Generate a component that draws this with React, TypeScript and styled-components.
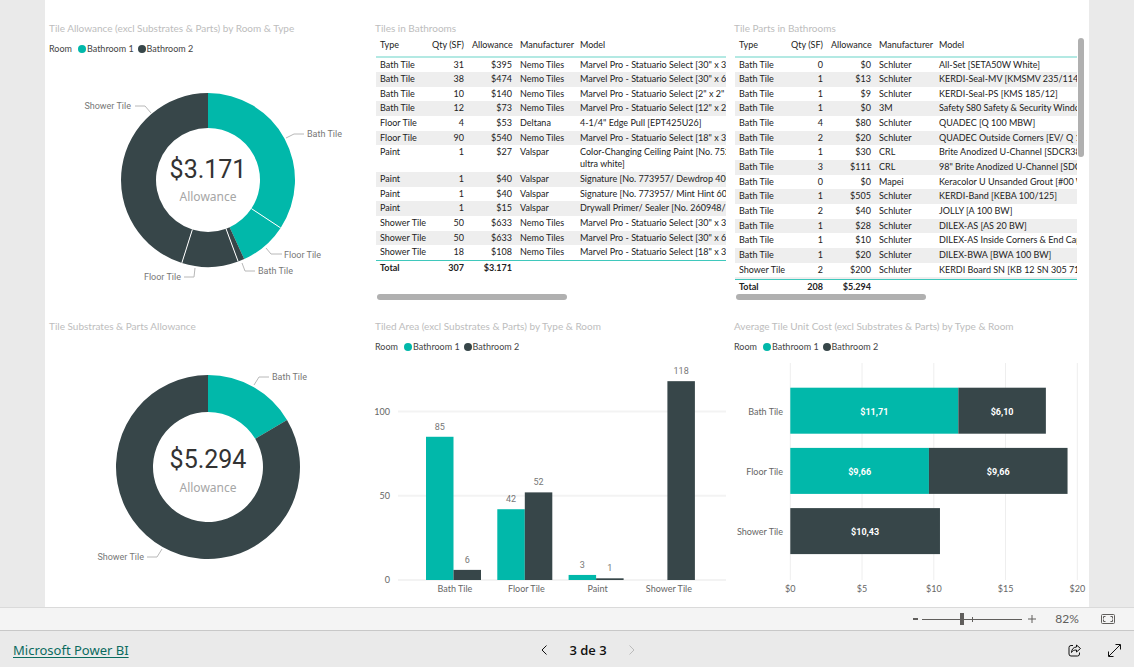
import React from "react";
import styled, { createGlobalStyle } from "styled-components";

const TEAL = "#01b8aa";
const SLATE = "#374649";
const UI = '"Noto Sans", "Open Sans", sans-serif';
const COMPACT = 'Lato, "Open Sans", sans-serif';
const DIN = 'Roboto, "Liberation Sans", sans-serif';

const GlobalStyle = createGlobalStyle`
  *, *::before, *::after { box-sizing: border-box; }
  body { margin: 0; background: #eaeaea; font-family: ${UI}; font-size: 9px; color: #333; }
`;

const Shell = styled.div`
  min-height: 100vh;
  display: flex;
  flex-direction: column;
`;

const Report = styled.main`
  flex: 1;
  margin: 0 45px;
  padding: 20px 4px 0;
  background: #fff;
  display: grid;
  grid-template-columns: 318fr 351fr 351fr;
  grid-template-rows: auto 1fr;
  column-gap: 8px;
  row-gap: 18px;
`;

const Panel = styled.section`
  min-width: 0;
  display: flex;
  flex-direction: column;
`;

const PanelTitle = styled.h2`
  margin: 0;
  font-family: ${COMPACT};
  font-size: 10px;
  font-weight: 400;
  line-height: 16px;
  color: #bdbdbd;
  white-space: nowrap;
`;

const LegendRow = styled.div`
  display: flex;
  align-items: center;
  margin-top: 5px;
  font-family: ${COMPACT};
  line-height: 16px;
  color: #444;
  white-space: nowrap;
`;

const LegendName = styled.span`
  margin-right: 6px;
`;

const LegendItem = styled.span`
  display: flex;
  align-items: center;
  gap: 1px;
  margin-right: 4px;
`;

const Dot = styled.i<{ $color: string }>`
  width: 8px;
  height: 8px;
  border-radius: 50%;
  background: ${(p) => p.$color};
`;

const Chart = styled.svg`
  display: block;
  width: 100%;
  height: auto;
  overflow: visible;
`;

const UiText = styled.text`
  font-family: ${COMPACT};
  font-size: 9px;
  fill: #666;
`;

const DataText = styled.text`
  font-family: ${DIN};
  font-size: 9px;
  fill: #777;
`;

const BarValue = styled(DataText)`
  font-weight: 700;
  fill: #fff;
`;

const BigNumber = styled.text`
  font-family: ${DIN};
  font-size: 25px;
  fill: #333;
`;

const Caption = styled.text`
  font-family: ${UI};
  font-size: 12px;
  fill: #a6a6a6;
`;

const TableArea = styled.div`
  display: flex;
  flex: 1;
`;

const TableClip = styled.div`
  flex: 1;
  min-width: 0;
  height: 258px;
  margin-left: 1px;
  overflow: hidden;
`;

const DataTable = styled.table`
  table-layout: fixed;
  width: 100%;
  border-spacing: 0;
  font-family: ${COMPACT};
  line-height: 12px;
  color: #222;
  white-space: pre;

  th, td {
    padding: 1px 4px 0;
    text-align: left;
    vertical-align: top;
    font-weight: 400;
  }
  th {
    padding: 0 4px 2px;
    line-height: 18px;
    border-bottom: 2px solid #b3e9e3;
  }
  tbody td { height: 15px; }
  tbody tr:first-child td, tbody tr:nth-child(3n) td { height: 14px; }
  tbody tr:nth-child(even) td { background: #eee; }
  tfoot td {
    height: 16px;
    border-top: 1px solid #3fc8bc;
    font-weight: 700;
  }
`;

const PeekRow = styled.tr`
  && td { height: 2px; padding: 0; line-height: 0; }
`;

const Col = styled.col<{ $w?: number }>`
  ${(p) => (p.$w ? `width: ${p.$w}px;` : "")}
`;

const NumHead = styled.th`
  && { text-align: right; }
`;

const NumCell = styled.td`
  && { text-align: right; }
`;

const TallCell = styled.td`
  && { padding-bottom: 2px; }
`;

const VerticalThumb = styled.div`
  width: 6px;
  height: 119px;
  margin: 2px 1px 0;
  border-radius: 3px;
  background: #b0b0b0;
`;

const HorizontalThumb = styled.div`
  width: 190px;
  height: 6px;
  margin: 0 0 0 2px;
  border-radius: 3px;
  background: #b0b0b0;
`;

const ZoomBar = styled.div`
  display: flex;
  align-items: center;
  justify-content: flex-end;
  height: 24px;
  padding-right: 18px;
  background: #f4f4f4;
  border-top: 1px solid #dadada;
  border-bottom: 1px solid #c8c8c8;
  color: #605e5c;
`;

const PlainButton = styled.button`
  display: flex;
  align-items: center;
  justify-content: center;
  padding: 0;
  border: 0;
  background: none;
  color: inherit;
  font: inherit;
  cursor: pointer;
`;

const ZoomButton = styled(PlainButton)<{ $w: number }>`
  width: ${(p) => p.$w}px;
  height: 16px;
`;

const Track = styled.div`
  position: relative;
  display: flex;
  width: 100px;

  &::after {
    content: "";
    position: absolute;
    left: 50px;
    top: 4px;
    width: 1px;
    height: 5px;
    background: #605e5c;
  }
`;

const ZoomRange = styled.input`
  appearance: none;
  width: 100%;
  height: 12px;
  margin: 0;
  background: linear-gradient(#605e5c, #605e5c) center / 100% 1px no-repeat;

  &::-webkit-slider-thumb {
    appearance: none;
    width: 4px;
    height: 12px;
    background: #605e5c;
  }
`;

const ZoomLevel = styled.output`
  width: 40px;
  margin: 0 14px 0 5px;
  text-align: center;
  font-family: ${COMPACT};
  font-size: 12px;
  line-height: 16px;
`;

const Footer = styled.footer`
  display: grid;
  grid-template-columns: 1fr auto 1fr;
  align-items: center;
  height: 36px;
  padding: 2px 13px 0;
`;

const BrandLink = styled.a`
  justify-self: start;
  font-size: 13px;
  line-height: 20px;
  color: #0b6b5f;
  text-underline-offset: 2px;
`;

const Pager = styled.nav`
  display: flex;
  align-items: center;
  gap: 17px;
  margin-left: 42px;
  font-family: "Open Sans", sans-serif;
  font-size: 13px;
  font-weight: 600;
  line-height: 20px;
  color: #111;
`;

const PagerButton = styled(PlainButton)`
  width: 16px;
  height: 20px;
  &:disabled { color: #bbb; cursor: default; }
`;

const Actions = styled.div`
  justify-self: end;
  display: flex;
  gap: 26px;
  color: #111;
`;

type Slice = { value: number; color: string };
type Callout = { text: string; points: string; x: number; y: number; end?: boolean };

const polar = (deg: number, r: number) => {
  const a = (deg * Math.PI) / 180;
  return `${(Math.sin(a) * r).toFixed(2)} ${(-Math.cos(a) * r).toFixed(2)}`;
};

function Donut(props: {
  label: string; viewBox: string; r: number; inner: number; slices: Slice[];
  callouts: Callout[]; total: string; totalY: number; captionY: number;
}) {
  const { r, inner, slices } = props;
  let angle = 0;
  const parts = slices.map((s) => {
    const from = angle;
    angle += s.value;
    return { ...s, from, to: angle };
  });
  return (
    <Chart viewBox={props.viewBox} role="img" aria-label={props.label}>
      {parts.map((p, i) => {
        const large = p.to - p.from > 180 ? 1 : 0;
        return (
          <path
            key={i}
            fill={p.color}
            d={`M${polar(p.from, r)}A${r} ${r} 0 ${large} 1 ${polar(p.to, r)}L${polar(p.to, inner)}A${inner} ${inner} 0 ${large} 0 ${polar(p.from, inner)}Z`}
          />
        );
      })}
      {parts.slice(1).map((p, i) =>
        parts[i].color === p.color ? (
          <path key={i} stroke="#fff" d={`M${polar(p.from, inner)}L${polar(p.from, r)}`} />
        ) : null
      )}
      {props.callouts.map((c, i) => (
        <g key={i}>
          <polyline points={c.points} fill="none" stroke="#b8b8b8" />
          <DataText x={c.x} y={c.y} textAnchor={c.end ? "end" : "start"}>{c.text}</DataText>
        </g>
      ))}
      <BigNumber x="0" y={props.totalY} textAnchor="middle">{props.total}</BigNumber>
      <Caption x="0" y={props.captionY} textAnchor="middle">Allowance</Caption>
    </Chart>
  );
}

function Legend() {
  return (
    <LegendRow>
      <LegendName>Room</LegendName>
      <LegendItem><Dot $color={TEAL} />Bathroom 1</LegendItem>
      <LegendItem><Dot $color={SLATE} />Bathroom 2</LegendItem>
    </LegendRow>
  );
}

type Row = [string, number, string, string, string];

const TILES: Row[] = [
  ["Bath Tile", 31, "$395", "Nemo Tiles", 'Marvel Pro - Statuario Select [30" x 30"]'],
  ["Bath Tile", 38, "$474", "Nemo Tiles", 'Marvel Pro - Statuario Select [30" x 60"]'],
  ["Bath Tile", 10, "$140", "Nemo Tiles", 'Marvel Pro - Statuario Select [2" x 2" Mosaic]'],
  ["Bath Tile", 12, "$73", "Nemo Tiles", 'Marvel Pro - Statuario Select [12" x 24"]'],
  ["Floor Tile", 4, "$53", "Deltana", '4-1/4" Edge Pull [EPT425U26]'],
  ["Floor Tile", 90, "$540", "Nemo Tiles", 'Marvel Pro - Statuario Select [18" x 36"]'],
  ["Paint", 1, "$27", "Valspar", "Color-Changing Ceiling Paint [No. 752/\nultra white]"],
  ["Paint", 1, "$40", "Valspar", "Signature [No. 773957/ Dewdrop 4006]"],
  ["Paint", 1, "$40", "Valspar", "Signature [No. 773957/ Mint Hint 6004]"],
  ["Paint", 1, "$15", "Valspar", "Drywall Primer/ Sealer [No. 260948/ White]"],
  ["Shower Tile", 50, "$633", "Nemo Tiles", 'Marvel Pro - Statuario Select [30" x 30"]'],
  ["Shower Tile", 50, "$633", "Nemo Tiles", 'Marvel Pro - Statuario Select [30" x 60"]'],
  ["Shower Tile", 18, "$108", "Nemo Tiles", 'Marvel Pro - Statuario Select [18" x 36"]'],
];

const PARTS: Row[] = [
  ["Bath Tile", 0, "$0", "Schluter", "All-Set [SETA50W White]"],
  ["Bath Tile", 1, "$13", "Schluter", "KERDI-Seal-MV [KMSMV 235/114]"],
  ["Bath Tile", 1, "$9", "Schluter", "KERDI-Seal-PS [KMS 185/12]"],
  ["Bath Tile", 1, "$0", "3M", "Safety S80 Safety & Security Window"],
  ["Bath Tile", 4, "$80", "Schluter", "QUADEC [Q 100 MBW]"],
  ["Bath Tile", 2, "$20", "Schluter", "QUADEC Outside Corners [EV/ Q 100]"],
  ["Bath Tile", 1, "$30", "CRL", "Brite Anodized U-Channel [SDCR38B]"],
  ["Bath Tile", 3, "$111", "CRL", '98" Brite Anodized U-Channel [SDCR]'],
  ["Bath Tile", 0, "$0", "Mapei", "Keracolor U Unsanded Grout [#00 White]"],
  ["Bath Tile", 1, "$505", "Schluter", "KERDI-Band [KEBA 100/125]"],
  ["Bath Tile", 2, "$40", "Schluter", "JOLLY [A 100 BW]"],
  ["Bath Tile", 1, "$28", "Schluter", "DILEX-AS [AS 20 BW]"],
  ["Bath Tile", 1, "$10", "Schluter", "DILEX-AS Inside Corners & End Caps"],
  ["Bath Tile", 1, "$20", "Schluter", "DILEX-BWA [BWA 100 BW]"],
  ["Shower Tile", 2, "$200", "Schluter", "KERDI Board SN [KB 12 SN 305 711 A]"],
];

function ItemTable(props: { rows: Row[]; qty: number; total: string; more?: boolean }) {
  return (
    <DataTable>
      <colgroup>
        <Col $w={52} /><Col $w={40} /><Col $w={48} /><Col $w={60} /><Col />
      </colgroup>
      <thead>
        <tr>
          <th>Type</th><NumHead>Qty (SF)</NumHead><NumHead>Allowance</NumHead><th>Manufacturer</th><th>Model</th>
        </tr>
      </thead>
      <tbody>
        {props.rows.map((r, i) => (
          <tr key={i}>
            <td>{r[0]}</td><NumCell>{r[1]}</NumCell><NumCell>{r[2]}</NumCell><td>{r[3]}</td>
            {r[4].includes("\n") ? <TallCell>{r[4]}</TallCell> : <td>{r[4]}</td>}
          </tr>
        ))}
        {props.more && <PeekRow><td colSpan={5} /></PeekRow>}
      </tbody>
      <tfoot>
        <tr>
          <td>Total</td><NumCell>{props.qty}</NumCell><NumCell>{props.total}</NumCell><td /><td />
        </tr>
      </tfoot>
    </DataTable>
  );
}

const AREA = [
  { name: "Bath Tile", values: [85, 6] },
  { name: "Floor Tile", values: [42, 52] },
  { name: "Paint", values: [3, 1] },
  { name: "Shower Tile", values: [0, 118] },
];

function AreaChart() {
  const base = 225;
  const y = (v: number) => base - v * 1.685;
  return (
    <Chart viewBox="0 0 351 250" role="img" aria-label="Tiled area by type and room">
      {[0, 50, 100].map((v) => (
        <g key={v}>
          <line x1="23" x2="351" y1={y(v)} y2={y(v)} stroke="#f3f3f3" strokeWidth="2" />
          <UiText x="15" y={y(v) + 3} textAnchor="end">{v}</UiText>
        </g>
      ))}
      {AREA.map((g, i) => {
        const x = 51 + i * 71.3;
        return (
          <g key={g.name}>
            {g.values.map((v, j) =>
              v > 0 ? (
                <g key={j}>
                  <rect x={x + j * 27.5} y={y(v)} width="27.5" height={v * 1.685} fill={j ? SLATE : TEAL} />
                  <DataText x={x + j * 27.5 + 13.75} y={y(v) - 7} textAnchor="middle">{v}</DataText>
                </g>
              ) : null
            )}
            <UiText x={x + 29} y="237" textAnchor="middle">{g.name}</UiText>
          </g>
        );
      })}
    </Chart>
  );
}

const COST = [
  { name: "Bath Tile", parts: [{ v: 11.71, t: "$11,71", c: TEAL }, { v: 6.1, t: "$6,10", c: SLATE }] },
  { name: "Floor Tile", parts: [{ v: 9.66, t: "$9,66", c: TEAL }, { v: 9.66, t: "$9,66", c: SLATE }] },
  { name: "Shower Tile", parts: [{ v: 10.43, t: "$10,43", c: SLATE }] },
];

function CostChart() {
  const x = (v: number) => 56.3 + v * 14.35;
  return (
    <Chart viewBox="0 0 351 250" role="img" aria-label="Average tile unit cost by type and room">
      {[0, 5, 10, 15, 20].map((v) => (
        <g key={v}>
          <line x1={x(v)} x2={x(v)} y1="8" y2="225" stroke="#eee" />
          <UiText x={x(v)} y="237" textAnchor="middle">{`$${v}`}</UiText>
        </g>
      ))}
      {COST.map((g, i) => {
        const y = 32.7 + i * 60.2;
        let sum = 0;
        return (
          <g key={g.name}>
            <UiText x="49" y={y + 27} textAnchor="end">{g.name}</UiText>
            {g.parts.map((p, j) => {
              const from = sum;
              sum += p.v;
              return (
                <g key={j}>
                  <rect x={x(from)} y={y} width={p.v * 14.35} height="46" fill={p.c} />
                  <BarValue x={x(from + p.v / 2)} y={y + 27} textAnchor="middle">{p.t}</BarValue>
                </g>
              );
            })}
          </g>
        );
      })}
    </Chart>
  );
}

export default function App() {
  return (
    <>
      <GlobalStyle />
      <Shell>
        <Report>
          <Panel>
            <PanelTitle>Tile Allowance (excl Substrates &amp; Parts) by Room &amp; Type</PanelTitle>
            <Legend />
            <Donut
              label="Tile allowance by room and type"
              viewBox="-159 -123 318 240"
              r={87}
              inner={52}
              slices={[
                { value: 123.4, color: TEAL },
                { value: 32, color: TEAL },
                { value: 4.3, color: SLATE },
                { value: 37.8, color: SLATE },
                { value: 162.5, color: SLATE },
              ]}
              callouts={[
                { text: "Shower Tile", points: "-73,-74 -63,-74 -57,-67", x: -77, y: -71, end: true },
                { text: "Bath Tile", points: "78,-42 86,-46 96,-46", x: 99, y: -43 },
                { text: "Floor Tile", points: "58,68 63,74 74,74", x: 76, y: 78 },
                { text: "Bath Tile", points: "34,83 37,91 47,91", x: 50, y: 94 },
                { text: "Floor Tile", points: "-13,88 -14,97 -24,97", x: -27, y: 100, end: true },
              ]}
              total="$3.171"
              totalY={-2}
              captionY={21}
            />
          </Panel>
          <Panel>
            <PanelTitle>Tiles in Bathrooms</PanelTitle>
            <TableArea>
              <TableClip>
                <ItemTable rows={TILES} qty={307} total="$3.171" />
              </TableClip>
            </TableArea>
            <HorizontalThumb />
          </Panel>
          <Panel>
            <PanelTitle>Tile Parts in Bathrooms</PanelTitle>
            <TableArea>
              <TableClip>
                <ItemTable rows={PARTS} qty={208} total="$5.294" more />
              </TableClip>
              <VerticalThumb />
            </TableArea>
            <HorizontalThumb />
          </Panel>
          <Panel>
            <PanelTitle>Tile Substrates &amp; Parts Allowance</PanelTitle>
            <Donut
              label="Tile substrates and parts allowance"
              viewBox="-159 -133 318 267"
              r={92}
              inner={55}
              slices={[{ value: 59.2, color: TEAL }, { value: 300.8, color: SLATE }]}
              callouts={[
                { text: "Bath Tile", points: "46,-82 51,-90 61,-90", x: 64, y: -87 },
                { text: "Shower Tile", points: "-46,82 -51,90 -61,90", x: -64, y: 93, end: true },
              ]}
              total="$5.294"
              totalY={1}
              captionY={25}
            />
          </Panel>
          <Panel>
            <PanelTitle>Tiled Area (excl Substrates &amp; Parts) by Type &amp; Room</PanelTitle>
            <Legend />
            <AreaChart />
          </Panel>
          <Panel>
            <PanelTitle>Average Tile Unit Cost (excl Substrates &amp; Parts) by Type &amp; Room</PanelTitle>
            <Legend />
            <CostChart />
          </Panel>
        </Report>
        <ZoomBar>
          <ZoomButton $w={14} aria-label="Zoom out">
            <svg width="5" height="2"><path d="M0 1h5" stroke="currentColor" strokeWidth="2" /></svg>
          </ZoomButton>
          <Track>
            <ZoomRange type="range" min="0" max="100" defaultValue="40" aria-label="Zoom" />
          </Track>
          <ZoomButton $w={20} aria-label="Zoom in">
            <svg width="8" height="8"><path d="M0 4h8M4 0v8" stroke="currentColor" /></svg>
          </ZoomButton>
          <ZoomLevel>82%</ZoomLevel>
          <PlainButton aria-label="Fit to page">
            <svg width="15" height="11" fill="none" stroke="currentColor">
              <rect x="0.5" y="0.5" width="13" height="9" rx="1" />
              <path d="M4.500 2.500h-2v2M2.500 5.500v2h2M9.500 2.500h2v2M11.500 5.500v2h-2" />
            </svg>
          </PlainButton>
        </ZoomBar>
        <Footer>
          <BrandLink href="#">Microsoft Power BI</BrandLink>
          <Pager aria-label="Pages">
            <PagerButton aria-label="Previous page">
              <svg width="6" height="10" fill="none" stroke="currentColor"><path d="M5.500 0.500L1 5l4.500 4.500" /></svg>
            </PagerButton>
            <span>3 de 3</span>
            <PagerButton aria-label="Next page" disabled>
              <svg width="6" height="10" fill="none" stroke="currentColor"><path d="M0.500 0.500L5 5 0.500 9.500" /></svg>
            </PagerButton>
          </Pager>
          <Actions>
            <PlainButton aria-label="Share">
              <svg width="14" height="13" fill="none" stroke="currentColor">
                <path d="M5 1.500H3a2 2 0 0 0-2 2V10a2 2 0 0 0 2 2h6.500a2 2 0 0 0 2-2V8.500" />
                <path d="M8.500 1l4 3.500-4 3.500V6C6 6 4.500 6.500 3.500 8.500 3.500 5.500 5.500 3 8.500 3z" strokeLinejoin="round" />
              </svg>
            </PlainButton>
            <PlainButton aria-label="Full screen">
              <svg width="13" height="13" fill="none" stroke="currentColor">
                <path d="M1 12L12 1M7.500 0.500h5v5M0.500 7.500v5h5" />
              </svg>
            </PlainButton>
          </Actions>
        </Footer>
      </Shell>
    </>
  );
}
